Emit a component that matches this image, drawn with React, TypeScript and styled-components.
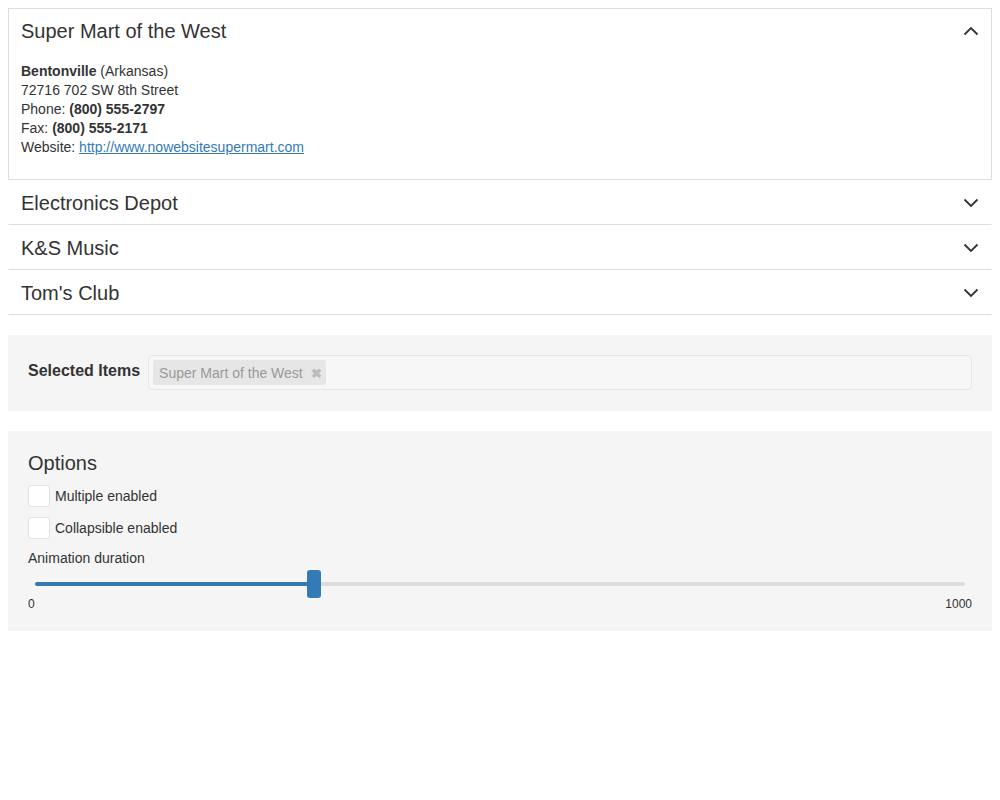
import React, { useState } from 'react';
import styled, { createGlobalStyle } from 'styled-components';

const GlobalStyle = createGlobalStyle`
  body {
    margin: 8px;
    font-family: "Liberation Sans", Arial, Helvetica, sans-serif;
    font-size: 14px;
    color: #333;
    background: #fff;
  }
`;

// --- Accordion ---
const Accordion = styled.div`
  display: flex;
  flex-direction: column;
`;

const Item = styled.div<{ $open: boolean }>`
  border: 1px solid transparent;
  border-top-width: 0;
  border-bottom-color: #ddd;
  ${p => p.$open && `
    border: 1px solid #ddd;
  `}
`;

const Header = styled.div<{ $open: boolean }>`
  display: flex;
  align-items: center;
  justify-content: space-between;
  padding: ${p => (p.$open ? '11px 12px' : '12px 12px 10px')};
  cursor: pointer;
`;

const Title = styled.span`
  font-size: 20px;
  line-height: 22px;
`;

const Body = styled.div`
  padding: 9px 12px 22px;
  line-height: 19px;
`;

const Link = styled.a`
  color: #337ab7;
  text-decoration: underline;
`;

const Chevron: React.FC<{ up: boolean }> = ({ up }) => (
  <svg width="16" height="10" viewBox="0 0 16 10">
    <polyline
      points={up ? '1.5,8.5 8,2 14.5,8.5' : '1.5,1.5 8,8 14.5,1.5'}
      fill="none"
      stroke="#333"
      strokeWidth="1.8"
    />
  </svg>
);

// --- Panels ---
const Panel = styled.div<{ $bottom?: number }>`
  background: #f5f5f5;
  padding: 20px 20px ${p => p.$bottom ?? 20}px;
  margin-top: 20px;
`;

const SelectedRow = styled.div`
  display: flex;
  align-items: flex-start;
  gap: 8px;
`;

const SelectedLabel = styled.span`
  font-weight: bold;
  font-size: 16px;
  line-height: 20px;
  padding-top: 6px;
  white-space: nowrap;
`;

const TagBox = styled.div`
  flex: 1;
  border: 1px solid #e6e6e6;
  border-radius: 4px;
  background: #f7f7f7;
  padding: 4px;
  display: flex;
  gap: 4px;
`;

const Tag = styled.span`
  display: inline-flex;
  align-items: center;
  gap: 8px;
  height: 25px;
  padding: 0 4px 0 6px;
  background: #e6e6e6;
  border-radius: 2px;
  color: #999;
  font-size: 14px;
`;

const TagRemove = styled.span`
  color: #bbb;
  font-size: 13px;
  font-weight: bold;
  padding-top: 2px;
`;

const OptionsTitle = styled.div`
  font-size: 20px;
  line-height: 22px;
  margin: 1px 0 11px;
`;

const CheckRow = styled.label`
  display: flex;
  align-items: center;
  gap: 5px;
  margin-bottom: 10px;
  line-height: 22px;
`;

const Box = styled.span`
  width: 20px;
  height: 20px;
  background: #fff;
  border: 1px solid #e2e2e2;
  border-radius: 3px;
`;

const SliderLabel = styled.div`
  line-height: 18px;
`;

const SliderWrap = styled.div`
  position: relative;
  height: 30px;
  margin: 0 7px;
`;

const Track = styled.div`
  position: absolute;
  left: 0;
  right: 0;
  top: 15px;
  height: 4px;
  border-radius: 2px;
  background: #ddd;
`;

const Fill = styled.div`
  position: absolute;
  left: 0;
  top: 15px;
  height: 4px;
  border-radius: 2px;
  background: #337ab7;
`;

const Handle = styled.div`
  position: absolute;
  top: 3px;
  width: 14px;
  height: 28px;
  margin-left: -7px;
  border-radius: 3px;
  background: #337ab7;
`;

const Scale = styled.div`
  display: flex;
  justify-content: space-between;
  font-size: 12px;
  line-height: 14px;
`;

const stores = ['Super Mart of the West', 'Electronics Depot', 'K&S Music', "Tom's Club"];

export default function App() {
  const [open, setOpen] = useState(0);
  const value = 300;
  const pct = `${(value / 1000) * 100}%`;

  return (
    <>
      <GlobalStyle />
      <Accordion>
        {stores.map((name, i) => (
          <Item key={name} $open={open === i}>
            <Header $open={open === i} onClick={() => setOpen(open === i ? -1 : i)}>
              <Title>{name}</Title>
              <Chevron up={open === i} />
            </Header>
            {open === i && i === 0 && (
              <Body>
                <div><b>Bentonville</b> (Arkansas)</div>
                <div>72716 702 SW 8th Street</div>
                <div>Phone: <b>(800) 555-2797</b></div>
                <div>Fax: <b>(800) 555-2171</b></div>
                <div>Website: <Link href="#">http://www.nowebsitesupermart.com</Link></div>
              </Body>
            )}
          </Item>
        ))}
      </Accordion>

      <Panel $bottom={21}>
        <SelectedRow>
          <SelectedLabel>Selected Items</SelectedLabel>
          <TagBox>
            <Tag>
              Super Mart of the West
              <TagRemove>✖</TagRemove>
            </Tag>
          </TagBox>
        </SelectedRow>
      </Panel>

      <Panel $bottom={20}>
        <OptionsTitle>Options</OptionsTitle>
        <CheckRow><Box />Multiple enabled</CheckRow>
        <CheckRow><Box />Collapsible enabled</CheckRow>
        <SliderLabel>Animation duration</SliderLabel>
        <SliderWrap>
          <Track />
          <Fill style={{ width: pct }} />
          <Handle style={{ left: pct }} />
        </SliderWrap>
        <Scale>
          <span>0</span>
          <span>1000</span>
        </Scale>
      </Panel>
    </>
  );
}
